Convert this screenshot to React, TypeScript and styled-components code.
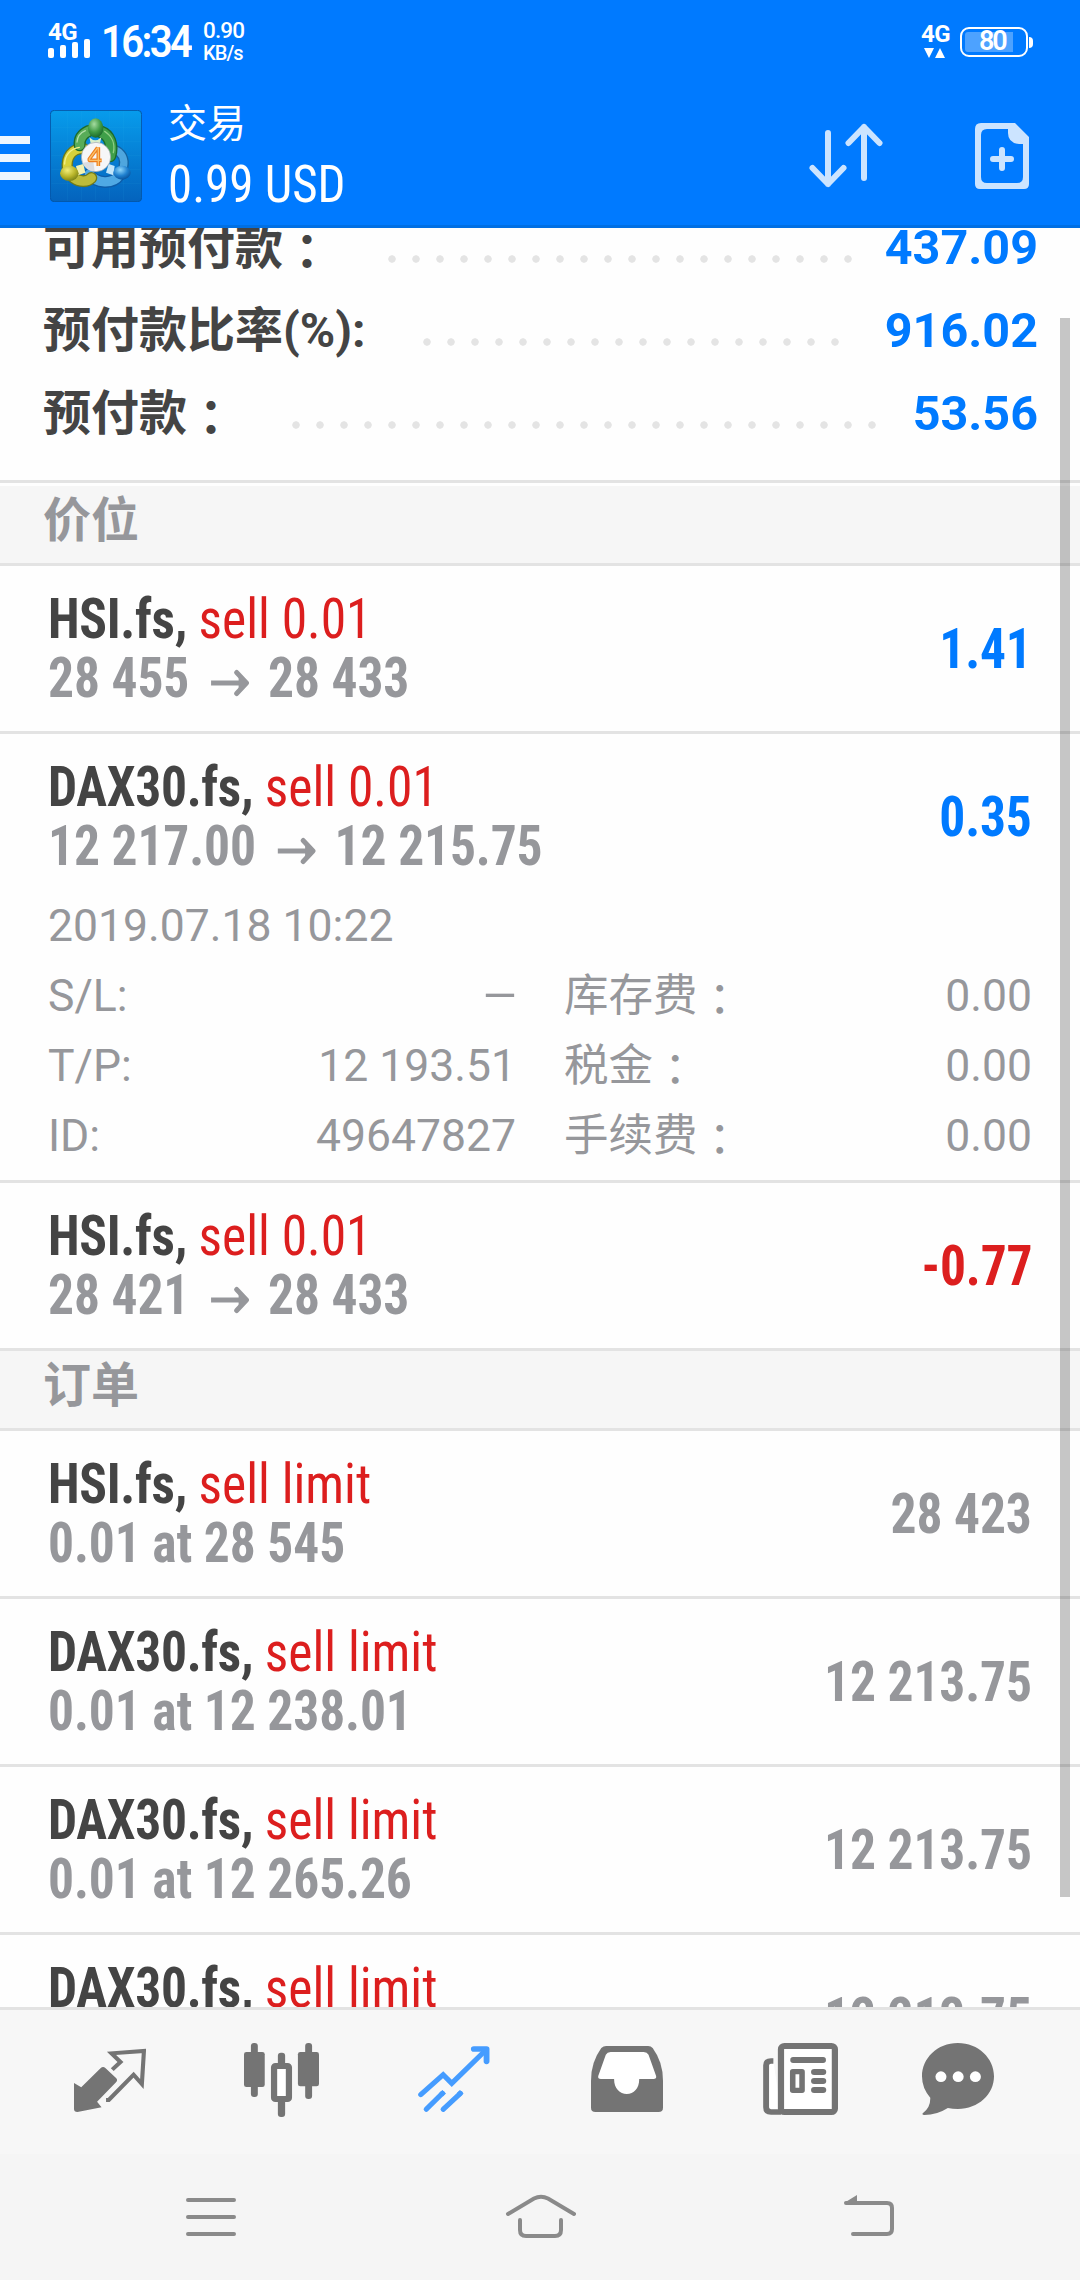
import React from "react";
import styled, { createGlobalStyle } from "styled-components";

const sans = `Roboto, "Noto Sans CJK SC", sans-serif`;
const narrow = `"Roboto Condensed", Roboto, "Noto Sans CJK SC", sans-serif`;
const blue = "#007aff";
const red = "#dc1e1e";
const grey = "#96979b";
const ink = "#444444";
const line = "#e3e3e3";

const GlobalStyle = createGlobalStyle`
  html, body { margin: 0; padding: 0; }
  body { width: 1080px; height: 2280px; overflow: hidden; background: #fff; font-family: ${sans}; }
  svg { display: block; flex: none; }
  * { box-sizing: border-box; }
`;

const Screen = styled.div`
  width: 1080px;
  height: 2280px;
  display: flex;
  flex-direction: column;
  background: #fefefe;
`;

const Header = styled.header`
  flex: none;
  height: 228px;
  background: ${blue};
  border-bottom: 3px solid #006fe3;
  color: #fff;
`;

const StatusBar = styled.div`
  height: 84px;
  display: flex;
  justify-content: space-between;
  padding: 20px 48px 0 48px;
`;

const StatusGroup = styled.div`
  display: flex;
  align-items: flex-start;
`;

const Signal = styled.div`
  width: 53px;
  padding-top: 2px;
`;

const NetLabel = styled.div`
  font: 700 24px/20px ${sans};
  letter-spacing: -0.6px;
`;

const Bars = styled.svg`
  margin-top: -3px;
`;

const Traffic = styled.svg`
  margin-top: 4px;
`;

const Clock = styled.div`
  width: 102px;
  font: 600 44px/34px ${sans};
  letter-spacing: -2.9px;
  padding-top: 5px;
  white-space: nowrap;
  transform: scaleX(0.91);
  transform-origin: left;
`;

const Speed = styled.div`
  font: 500 22.5px/24px ${sans};
  letter-spacing: -0.9px;
  margin-top: -2px;
`;

const SpeedUnit = styled.div`
  font-size: 20px;
  line-height: 22px;
`;

const DataState = styled.div`
  width: 39px;
  padding-top: 4px;
`;

const Battery = styled.div`
  width: 68px;
  height: 30px;
  margin: 7px 4px 0 0;
  border: 2px solid #fff;
  border-radius: 9px;
  padding: 3px;
  position: relative;
  &::after {
    content: "";
    position: absolute;
    left: 67px;
    top: 8px;
    width: 4px;
    height: 11px;
    border-radius: 0 4px 4px 0;
    background: #fff;
  }
`;

const Charge = styled.div`
  width: 48px;
  height: 20px;
  border-radius: 3px 0 0 3px;
  background: #4da2ff;
  font: 600 27px/19px ${sans};
  letter-spacing: -2.2px;
  padding-left: 14px;
`;

const AppBar = styled.div`
  height: 141px;
  display: flex;
  align-items: flex-start;
  padding: 16px 51px 0 0;
`;

const Drawer = styled.div`
  width: 30px;
  height: 44px;
  margin: 36px 20px 0 0;
  display: flex;
  flex-direction: column;
  justify-content: space-between;
  i { height: 8px; background: #eef6ff; }
`;

const Logo = styled.div`
  width: 92px;
  height: 92px;
  margin: 10px 26px 0 0;
`;

const Titles = styled.div`
  flex: 1;
`;

const Title = styled.div`
  font: 400 39px/48px ${sans};
`;

const Balance = styled.div`
  font: 400 51px/60px ${narrow};
  padding-top: 7px;
  transform: scaleX(0.96);
  transform-origin: left;
`;

const Actions = styled.div`
  display: flex;
  gap: 91px;
  padding-top: 23px;
`;

const Content = styled.main`
  flex: none;
  height: 1779px;
  overflow: hidden;
  position: relative;
`;

const Scrollbar = styled.div`
  position: absolute;
  left: 1060px;
  top: 90px;
  width: 10px;
  height: 1579px;
  background: rgba(0, 0, 0, 0.22);
`;

const Summary = styled.section`
  display: flow-root;
  height: 255px;
  border-bottom: 3px solid ${line};
  margin-bottom: 3px;
`;

const SummaryRow = styled.div`
  height: 83px;
  display: flex;
  align-items: flex-start;
  padding: 0 42px 0 43px;
  &:first-child { margin-top: -20px; }
`;

const SummaryLabel = styled.div<{ $w: number }>`
  width: ${(p) => p.$w}px;
  flex: none;
  white-space: nowrap;
  font: 700 48px/80px ${sans};
  color: ${ink};
`;

const Colon = styled.span`
  font-family: "Noto Sans CJK TC", sans-serif;
  line-height: 0;
  vertical-align: -5px;
`;

const Dots = styled.div<{ $count: number }>`
  width: ${(p) => p.$count * 24}px;
  height: 24px;
  margin-top: 39px;
  background: radial-gradient(circle at center, #e4e4e4 3.4px, transparent 4px) 0 0 / 24px 24px;
`;

const SummaryValue = styled.div`
  margin-left: auto;
  font: 700 48.5px/80px ${sans};
  color: ${blue};
`;

const Section = styled.div`
  height: 80px;
  padding-left: 43px;
  background: #f6f6f6;
  border-bottom: 3px solid ${line};
  font: 700 48px/70px ${sans};
  color: ${grey};
`;

const Item = styled.div`
  border-bottom: 3px solid ${line};
`;

const ItemMain = styled.div`
  height: 165px;
  display: flex;
  justify-content: space-between;
  padding: 24px 48px 0 48px;
`;

const ItemLine = styled.div`
  display: flex;
  align-items: center;
  width: max-content;
  height: 59px;
  font: 700 55px/59px ${narrow};
  letter-spacing: -0.15px;
  color: ${grey};
  white-space: pre;
  transform: scaleX(0.937);
  transform-origin: left;
  svg { margin: 9px 20px 0 23px; }
`;

const Symbol = styled.span`
  color: ${ink};
  letter-spacing: -0.35px;
`;

const Side = styled.span`
  color: ${red};
  font-weight: 400;
  letter-spacing: 0;
`;

const Amount = styled.div<{ $c: string }>`
  font: 700 55px/59px ${narrow};
  letter-spacing: -0.15px;
  padding-top: 30px;
  color: ${(p) => p.$c};
  transform: scaleX(0.937);
  transform-origin: right;
`;

const Details = styled.div`
  height: 281px;
  padding: 0 48px;
  display: grid;
  grid-template-columns: 468px 48px 1fr;
  grid-template-rows: 62px 70px 70px 70px;
  align-items: end;
  font: 400 44.5px/70px ${sans};
  color: ${grey};
`;

const OpenTime = styled.div`
  grid-column: 1 / -1;
`;

const Pair = styled.div<{ $col: number }>`
  grid-column: ${(p) => p.$col};
  height: 70px;
  display: flex;
  justify-content: space-between;
`;

const Dash = styled.span`
  transform: scaleX(1.3);
  transform-origin: right;
  margin-right: -3px;
`;

const TabBar = styled.nav`
  flex: none;
  height: 147px;
  border-top: 3px solid ${line};
  background: #f7f7f7;
  display: flex;
  align-items: flex-start;
  padding: 33px 0 0 74px;
  gap: 99px;
  svg:nth-child(2) { margin-left: -1px; }
  svg:nth-child(4) { margin-left: 2px; }
  svg:nth-child(5) { margin-left: 1px; }
  svg:last-child { margin-left: -15px; }
`;

const SystemBar = styled.div`
  flex: none;
  height: 126px;
  background: #f5f5f5;
  display: flex;
  justify-content: space-between;
  padding: 39px 185px 0 185px;
`;

function Label({ text }: { text: string }) {
  const wide = text.endsWith("：");
  return (
    <span>
      {wide ? text.slice(0, -1) : text}
      {wide && <Colon lang="zh-Hant">：</Colon>}
    </span>
  );
}

function SummaryItem({ label, value, count, w }: { label: string; value: string; count: number; w: number }) {
  return (
    <SummaryRow>
      <SummaryLabel $w={w}>
        <Label text={label} />
      </SummaryLabel>
      <Dots $count={count} />
      <SummaryValue>{value}</SummaryValue>
    </SummaryRow>
  );
}

function Arrow() {
  return (
    <svg width="41" height="28" viewBox="0 0 39 28" preserveAspectRatio="none" fill="none" stroke={grey} strokeWidth="5">
      <path d="M0 14H34" />
      <path d="M26 3.500 36 14 26 24.500" strokeLinecap="round" strokeLinejoin="round" />
      <path d="M28 8 36 14 28 20Z" fill={grey} stroke="none" />
    </svg>
  );
}

type Trade = { symbol: string; side: string; from?: string; to?: string; note?: string; amount: string; color: string };

function TradeItem({ t, children }: { t: Trade; children?: React.ReactNode }) {
  return (
    <Item>
      <ItemMain>
        <div>
          <ItemLine>
            <Symbol>{t.symbol}, </Symbol>
            <Side>{t.side}</Side>
          </ItemLine>
          <ItemLine>
            {t.note ?? (
              <>
                {t.from}
                <Arrow />
                {t.to}
              </>
            )}
          </ItemLine>
        </div>
        <Amount $c={t.color}>{t.amount}</Amount>
      </ItemMain>
      {children}
    </Item>
  );
}

function LogoArt() {
  return (
    <svg width="92" height="92" viewBox="0 0 276 276">
      <defs>
        <linearGradient id="bg" x1="0" y1="0" x2="0" y2="1">
          <stop offset="0" stopColor="#079cec" />
          <stop offset="1" stopColor="#0463bd" />
        </linearGradient>
        <radialGradient id="gr" cx="0.4" cy="0.3" r="0.7">
          <stop offset="0" stopColor="#a5dba0" />
          <stop offset="0.6" stopColor="#3f9a45" />
          <stop offset="1" stopColor="#1d6b2c" />
        </radialGradient>
        <radialGradient id="ye" cx="0.4" cy="0.3" r="0.7">
          <stop offset="0" stopColor="#f2ee7a" />
          <stop offset="0.6" stopColor="#b9b52a" />
          <stop offset="1" stopColor="#7d8418" />
        </radialGradient>
        <radialGradient id="bl" cx="0.4" cy="0.3" r="0.7">
          <stop offset="0" stopColor="#8ed6fb" />
          <stop offset="0.6" stopColor="#1f80cf" />
          <stop offset="1" stopColor="#0a559f" />
        </radialGradient>
      </defs>
      <rect x="1" y="1" width="274" height="274" rx="12" fill="url(#bg)" stroke="#0556a5" strokeWidth="3" />
      <path d="M52 4V272M94 4V272M136 4V272M178 4V272M220 4V272M4 52H272M4 94H272M4 136H272M4 178H272M4 220H272" stroke="#4cc3f5" strokeOpacity="0.13" strokeWidth="2" />
      <g fill="none" strokeLinecap="round">
        <path d="M192 118C214 126 226 146 220 172" stroke="#14629f" strokeWidth="30" />
        <path d="M192 118C214 126 226 146 220 172" stroke="#4fa6de" strokeWidth="22" />
        <path d="M118 192C140 222 188 224 208 196" stroke="#0d5ca8" strokeWidth="36" />
        <path d="M118 192C140 222 188 224 208 196" stroke="#4fa9e4" strokeWidth="28" />
        <path d="M101 116C66 114 48 142 52 176" stroke="#6f7a1a" strokeWidth="34" />
        <path d="M101 116C66 114 48 142 52 176" stroke="#d8d23a" strokeWidth="26" />
        <path d="M72 204C88 216 112 217 124 204" stroke="#6f7a1a" strokeWidth="36" />
        <path d="M72 204C88 216 112 217 124 204" stroke="#bdbb3a" strokeWidth="28" />
        <path d="M89 106C87 86 97 72 116 63" stroke="#1c6a2c" strokeWidth="36" />
        <path d="M89 106C87 86 97 72 116 63" stroke="#58ac58" strokeWidth="28" />
        <path d="M152 65C178 74 190 104 180 138" stroke="#1c6a2c" strokeWidth="38" />
        <path d="M152 65C178 74 190 104 180 138" stroke="#3f9f49" strokeWidth="30" />
        <path d="M164 64C186 78 196 102 190 128" stroke="#8fce84" strokeWidth="4" />
        <path d="M81 96C82 82 92 68 106 62" stroke="#b2dfaa" strokeWidth="4" />
        <path d="M44 162C44 138 60 116 88 112" stroke="#f3f08a" strokeWidth="4" />
      </g>
      <path d="M118 82Q136 100 154 82L150 100H122Z" fill="#d8f0cc" />
      <path d="M78 168L100 162 106 188 84 196Z" fill="#f4f2b0" />
      <path d="M194 168L176 162 168 188 190 196Z" fill="#c3e6fa" />
      <ellipse cx="137" cy="54" rx="23" ry="29" fill="url(#gr)" />
      <ellipse cx="58" cy="190" rx="28" ry="23" fill="url(#ye)" />
      <ellipse cx="216" cy="188" rx="26" ry="21" fill="url(#bl)" />
      <circle cx="138" cy="141" r="44" fill="#f6f6f8" stroke="#9aa3ab" strokeWidth="2" />
      <path d="M97 158A44 44 0 0 0 134 184L130 154Z" fill="#dadce1" />
      <g fill="none" stroke="#ee7f1e" strokeWidth="11" strokeLinejoin="round">
        <path d="M143 113 118 147V151H155M145 112V168" />
        <path d="M143 113 118 147V151H155M145 112V168" stroke="#fbc06a" strokeWidth="4" />
      </g>
    </svg>
  );
}

const icon = "#747474";

export default function App() {
  return (
    <>
      <GlobalStyle />
      <Screen>
        <Header>
          <StatusBar>
            <StatusGroup>
              <Signal>
                <NetLabel>4G</NetLabel>
                <Bars width="42" height="19" viewBox="0 0 42 19" fill="#fff">
                  <rect x="0" y="9" width="6" height="10" rx="2" />
                  <rect x="12" y="6" width="6" height="13" rx="2" />
                  <rect x="24" y="3" width="6" height="16" rx="2" />
                  <rect x="36" y="0" width="6" height="19" rx="2" />
                </Bars>
              </Signal>
              <Clock>16:34</Clock>
              <Speed>
                0.90
                <SpeedUnit>KB/s</SpeedUnit>
              </Speed>
            </StatusGroup>
            <StatusGroup>
              <DataState>
                <NetLabel>4G</NetLabel>
                <Traffic width="28" height="10" viewBox="0 0 28 10" fill="#fff">
                  <path d="M3 0H13L8 10ZM14 10H24L19 0Z" />
                </Traffic>
              </DataState>
              <Battery>
                <Charge>80</Charge>
              </Battery>
            </StatusGroup>
          </StatusBar>
          <AppBar>
            <Drawer>
              <i />
              <i />
              <i />
            </Drawer>
            <Logo>
              <LogoArt />
            </Logo>
            <Titles>
              <Title>交易</Title>
              <Balance>0.99 USD</Balance>
            </Titles>
            <Actions>
              <svg width="76" height="66" viewBox="808 123 76 66" fill="none" stroke="#cce4ff" strokeWidth="6" strokeLinecap="round" strokeLinejoin="round">
                <path d="M828 133V184M812.500 168 828 184 843.500 168M864 178V127M848.500 143 864 127 879.500 143" />
              </svg>
              <svg width="54" height="66" viewBox="0 0 54 66">
                <path d="M6 0H40L54 14V61Q54 66 49 66H5Q0 66 0 61V6Q0 0 6 0ZM33 6H12Q6 6 6 12V54Q6 60 12 60H42Q48 60 48 54V21H44Q33 20 33 10Z" fill="#cce4ff" fillRule="evenodd" />
                <path d="M27 27V45M18 36H36" stroke="#cce4ff" strokeWidth="6" strokeLinecap="round" />
              </svg>
            </Actions>
          </AppBar>
        </Header>

        <Content>
          <Summary>
            <SummaryItem label="可用预付款：" value="437.09" count={20} w={337} />
            <SummaryItem label="预付款比率(%):" value="916.02" count={18} w={372} />
            <SummaryItem label="预付款：" value="53.56" count={25} w={241} />
          </Summary>
          <Section>价位</Section>
          <TradeItem t={{ symbol: "HSI.fs", side: "sell 0.01", from: "28 455", to: "28 433", amount: "1.41", color: blue }} />
          <TradeItem t={{ symbol: "DAX30.fs", side: "sell 0.01", from: "12 217.00", to: "12 215.75", amount: "0.35", color: blue }}>
            <Details>
              <OpenTime>2019.07.18 10:22</OpenTime>
              <Pair $col={1}><span>S/L:</span><Dash>–</Dash></Pair>
              <Pair $col={3}><Label text="库存费：" /><span>0.00</span></Pair>
              <Pair $col={1}><span>T/P:</span><span>12 193.51</span></Pair>
              <Pair $col={3}><Label text="税金：" /><span>0.00</span></Pair>
              <Pair $col={1}><span>ID:</span><span>49647827</span></Pair>
              <Pair $col={3}><Label text="手续费：" /><span>0.00</span></Pair>
            </Details>
          </TradeItem>
          <TradeItem t={{ symbol: "HSI.fs", side: "sell 0.01", from: "28 421", to: "28 433", amount: "-0.77", color: red }} />
          <Section>订单</Section>
          <TradeItem t={{ symbol: "HSI.fs", side: "sell limit", note: "0.01 at 28 545", amount: "28 423", color: grey }} />
          <TradeItem t={{ symbol: "DAX30.fs", side: "sell limit", note: "0.01 at 12 238.01", amount: "12 213.75", color: grey }} />
          <TradeItem t={{ symbol: "DAX30.fs", side: "sell limit", note: "0.01 at 12 265.26", amount: "12 213.75", color: grey }} />
          <TradeItem t={{ symbol: "DAX30.fs", side: "sell limit", note: "", amount: "12 213.75", color: grey }} />
          <Scrollbar />
        </Content>

        <TabBar>
          <svg width="72" height="74" viewBox="215 189 209 222" preserveAspectRatio="none" fill={icon}>
            <path d="M215 309 236 322 292 265Q299 258 306 264L337 294Q343 300 337 307L282 365 295 382 225 396Q215 396 215 387Z" />
            <path d="M326 269 350 246 324 220 418 213 412 312 388 284 316 360H308" fill="none" stroke={icon} strokeWidth="12" />
          </svg>
          <svg width="75" height="74" viewBox="709 189 217 222" preserveAspectRatio="none" fill={icon}>
            <rect x="729" y="189" width="20" height="162" rx="9" />
            <rect x="709" y="216" width="60" height="105" rx="7" />
            <rect x="886" y="189" width="20" height="168" rx="9" />
            <rect x="865" y="216" width="61" height="103" rx="7" />
            <rect x="807" y="218" width="21" height="60" rx="9" />
            <rect x="807" y="350" width="21" height="61" rx="9" />
            <rect x="796" y="258" width="43" height="99" rx="4" fill="#fff" stroke={icon} strokeWidth="18" />
          </svg>
          <svg width="72" height="74" viewBox="1213 189 209 222" preserveAspectRatio="none" fill="none" stroke="#459cff" strokeWidth="15" strokeLinecap="round" strokeLinejoin="round">
            <path d="M1221 344 1286 284 1311 310 1410 210" strokeLinejoin="miter" />
            <path d="M1375 207H1412V244" strokeWidth="17" />
            <path d="M1237 388 1284 340M1286 388 1336 340" />
            <path d="M1280 344 1289 335M1331 344 1340 335" strokeLinecap="butt" />
          </svg>
          <svg width="72" height="74" viewBox="148 189 209 222" preserveAspectRatio="none">
            <path d="M192 198H314Q322 198 327 204Q357 246 357 302V383Q357 396 344 396H161Q148 396 148 383V302Q148 246 178 204Q184 198 192 198Z" fill={icon} />
            <path d="M205 216H301Q311 216 315 224L337 288Q339 297 329 297H288C288 326 272 342 252 342S215 326 215 297H177Q167 297 169 288L191 224Q195 216 205 216Z" fill="#fff" />
          </svg>
          <svg width="75" height="74" viewBox="648 189 217 222" preserveAspectRatio="none">
            <path d="M678 243H671Q657 243 657 256V382Q657 396 671 396H700" fill="#fff" stroke={icon} strokeWidth="17" />
            <rect x="700" y="198" width="156" height="198" rx="10" fill="#fff" stroke={icon} strokeWidth="18" />
            <rect x="727" y="231" width="103" height="18" rx="8" fill={icon} />
            <rect x="734" y="275" width="27" height="56" fill="#fff" stroke={icon} strokeWidth="16" strokeLinejoin="round" />
            <path d="M796 276H822M796 303H822M796 330H822" stroke={icon} strokeWidth="18" strokeLinecap="round" />
          </svg>
          <svg width="72" height="74" viewBox="1109 189 209 222" preserveAspectRatio="none">
            <path d="M1213 189C1273 189 1318 235 1318 289S1273 387 1213 387Q1198 387 1184 384Q1152 405 1116 405Q1107 404 1112 399Q1134 382 1133 353Q1109 325 1109 289C1109 235 1153 189 1213 189Z" fill={icon} />
            <circle cx="1164" cy="290" r="16" fill="#fff" />
            <circle cx="1214" cy="290" r="16" fill="#fff" />
            <circle cx="1264" cy="290" r="16" fill="#fff" />
          </svg>
        </TabBar>

        <SystemBar>
          <svg width="52" height="48" viewBox="185 2193 52 48" stroke="#8a8a8a" strokeWidth="4" strokeLinecap="round">
            <path d="M188 2200H234M188 2217H234M188 2234H234" />
          </svg>
          <svg width="72" height="48" viewBox="504 2193 72 48" fill="none" stroke="#8a8a8a" strokeWidth="4" strokeLinecap="round">
            <path d="M508 2214 534 2198.500Q541 2195 548 2198.500L574 2214M520 2220V2230Q520 2236 526 2236H555Q561 2236 561 2230V2220" />
          </svg>
          <svg width="52" height="48" viewBox="843 2193 52 48" fill="none" stroke="#8a8a8a" strokeWidth="4" strokeLinecap="round">
            <path d="M846 2203H887Q892 2203 892 2208V2229Q892 2234 887 2234H853" />
            <path d="M844 2203 857 2195V2204Z" fill="#8a8a8a" stroke="none" />
          </svg>
        </SystemBar>
      </Screen>
    </>
  );
}
